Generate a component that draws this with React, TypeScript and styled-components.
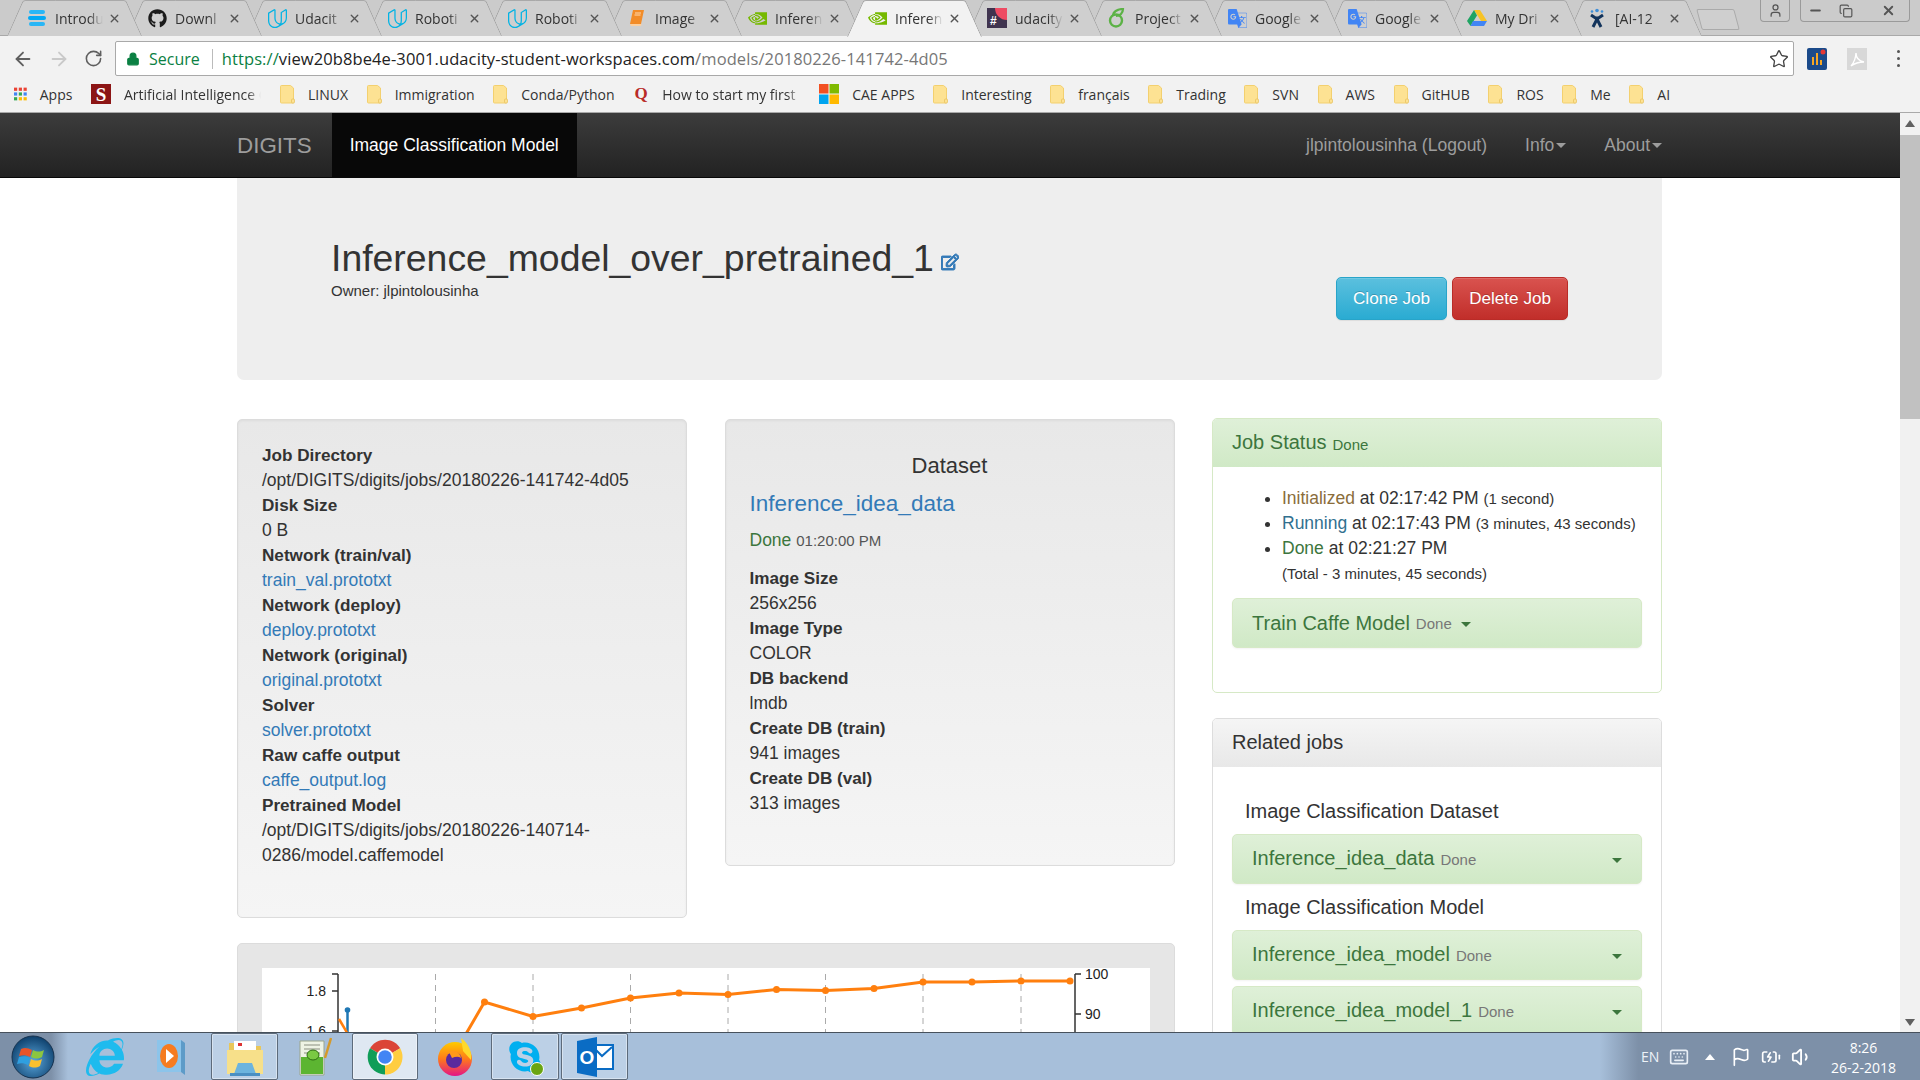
import React from "react";
import styled, { createGlobalStyle } from "styled-components";
import {
  ArrowLeft,
  ArrowRight,
  RotateCw,
  Star,
  X,
  User,
  Minus,
  Copy,
  Lock,
  Flag,
  Volume1,
  Keyboard,
  BatteryCharging,
} from "lucide-react";
import { FaGithub, FaRegEdit, FaSkype, FaInternetExplorer } from "react-icons/fa";
import { SiUdacity, SiNvidia, SiGoogletranslate } from "react-icons/si";

const FONT = '"Liberation Sans", Arial, sans-serif';
const UI_FONT = '"Open Sans", "Liberation Sans", sans-serif';

const HamburgerIcon = () => (
  <svg width="18" height="18" viewBox="0 0 18 18">
    <rect x="1" y="1" width="16" height="4" rx="2" fill="#29b6f6" />
    <rect x="0" y="7" width="18" height="4" rx="2" fill="#03a9f4" />
    <rect x="1" y="13" width="16" height="4" rx="2" fill="#29b6f6" />
  </svg>
);

const BookIcon = () => (
  <svg width="18" height="18" viewBox="0 0 18 18">
    <path d="M5 1h11l-3 14H2z" fill="#f28c28" />
    <path d="M2 15l1 2h10l.5-2z" fill="#fbd0a0" />
    <path d="M7 4h6M6.5 6h6" stroke="#ffd9b0" strokeWidth="1" />
  </svg>
);

const SlackIcon = () => (
  <svg width="20" height="20" viewBox="0 0 20 20">
    <rect width="20" height="20" fill="#40344f" />
    <path d="M8 0h12v12a12 12 0 0 1-12-12z" fill="#ee4b63" />
    <text x="3" y="17" fontSize="12" fontWeight="700" fontFamily={FONT} fill="#fff">#</text>
  </svg>
);

const LeafIcon = () => (
  <svg width="18" height="20" viewBox="0 0 18 20" fill="none">
    <circle cx="8" cy="12.5" r="6" stroke="#5cb246" strokeWidth="2.4" />
    <path d="M5 8c0-4 4-7 10-7-0 4-3 7-7 7" stroke="#5cb246" strokeWidth="2.2" />
  </svg>
);

const DriveIcon = () => (
  <svg width="20" height="18" viewBox="0 0 20 18">
    <path d="M7 1h6l7 11h-6z" fill="#f7c325" />
    <path d="M7 1l3 5.5L3.5 17 0 12z" fill="#1fa463" />
    <path d="M6 12h14l-3 5H3.500z" fill="#4285f4" />
  </svg>
);

const JiraIcon = () => (
  <svg width="18" height="20" viewBox="0 0 18 20" fill="none">
    <circle cx="9" cy="2.500" r="1.800" fill="#3f8fd8" />
    <circle cx="4" cy="3.500" r="1.300" fill="#3f8fd8" />
    <circle cx="14" cy="3.500" r="1.300" fill="#3f8fd8" />
    <path d="M3 7l6 4 6-4M5 19l4-8 4 8" stroke="#12335b" strokeWidth="3" />
  </svg>
);

const AppsIcon = () => (
  <svg width="18" height="18" viewBox="0 0 16 16">
    {["#ea4335", "#ea4335", "#ea4335", "#4285f4", "#34a853", "#4285f4", "#34a853", "#fbbc05", "#fbbc05"].map((c, i) => (
      <rect key={i} x={(i % 3) * 6} y={Math.floor(i / 3) * 6} width="4" height="4" fill={c} />
    ))}
  </svg>
);

const StanfordIcon = () => (
  <svg width="20" height="20" viewBox="0 0 20 20">
    <rect width="20" height="20" fill="#8c1515" />
    <text x="10" y="17" textAnchor="middle" fontSize="19" fontWeight="700" fontFamily='"Liberation Serif", serif' fill="#fff">S</text>
  </svg>
);

const QuoraIcon = () => (
  <svg width="16" height="18" viewBox="0 0 16 18">
    <text x="8" y="14" textAnchor="middle" fontSize="17" fontWeight="700" fontFamily='"Liberation Serif", serif' fill="#b92b27">Q</text>
  </svg>
);

const MsIcon = () => (
  <svg width="20" height="20" viewBox="0 0 20 20">
    <rect width="9.500" height="9.500" fill="#f25022" />
    <rect x="10.500" width="9.500" height="9.500" fill="#7fba00" />
    <rect y="10.500" width="9.500" height="9.500" fill="#00a4ef" />
    <rect x="10.500" y="10.500" width="9.500" height="9.500" fill="#ffb900" />
  </svg>
);

const FolderIcon = () => (
  <svg width="15" height="19" viewBox="0 0 15 19">
    <path d="M1.500 .5h9l3 2.500v15h-12a1 1 0 0 1-1-1V1.500a1 1 0 0 1 1-1z" fill="#fde293" stroke="#f3d06f" />
    <rect x="11.500" y="14" width="3" height="4" rx="1" fill="#fde293" stroke="#e5bf5a" strokeWidth=".7" />
  </svg>
);

const ExtensionIcon = () => (
  <svg width="20" height="22" viewBox="0 0 20 22">
    <rect width="20" height="22" rx="2" fill="#1a4a8a" />
    <path d="M6 17V9M10 17V5M14 17v-5" stroke="#f5a623" strokeWidth="2" />
    <circle cx="16" cy="4" r="2.500" fill="#e53935" />
  </svg>
);

const PdfIcon = () => (
  <svg width="20" height="22" viewBox="0 0 20 22" fill="none">
    <rect width="20" height="22" fill="#d8d8d8" />
    <path d="M4 18c3-3 5-9 5-13 0 5 3 8 8 9-4 0-9 1-13 4z" stroke="#fff" strokeWidth="1.400" />
  </svg>
);

const Orb = () => (
  <svg width="44" height="44" viewBox="0 0 44 44">
    <defs>
      <radialGradient id="orb" cx="50%" cy="60%" r="60%">
        <stop offset="0" stopColor="#5aa7dd" />
        <stop offset="1" stopColor="#0d3f6b" />
      </radialGradient>
    </defs>
    <circle cx="22" cy="22" r="21" fill="url(#orb)" stroke="#16324f" />
    <path d="M10 14c4-2 7-1 11 1l-2 7c-4-2-7-2-11-1z" fill="#e8542a" />
    <path d="M22 15c4 2 7 2 11 0l-2 7c-4 2-7 2-11 0z" fill="#8cc63f" />
    <path d="M8 22c4-1 7-1 11 1l-2 7c-4-2-7-2-11-1z" fill="#2f9fe0" />
    <path d="M20 24c4 2 7 2 11 0l-2 7c-4 2-7 2-11 0z" fill="#fbc02d" />
  </svg>
);

const MediaIcon = () => (
  <svg width="34" height="38" viewBox="0 0 34 38">
    <path d="M4 2h24v32H4z" fill="#8cc4ea" />
    <path d="M28 2l4 3v32l-4-3z" fill="#5d9bc8" />
    <ellipse cx="16" cy="18" rx="9" ry="12" fill="#f57c20" />
    <path d="M13 11l8 7-8 7z" fill="#fff" />
  </svg>
);

const ExplorerIcon = () => (
  <svg width="38" height="40" viewBox="0 0 38 40">
    <path d="M3 6h13l3 3h16v16H3z" fill="#e9c75a" />
    <rect x="8" y="4" width="22" height="12" fill="#fff" />
    <rect x="12" y="6" width="4" height="3" fill="#d33" />
    <path d="M1 13h36v24H1z" fill="#f7e08a" />
    <path d="M12 26h14l4 11H8z" fill="#6cb4de" />
    <rect x="4" y="36" width="30" height="3" fill="#4a8fc2" />
  </svg>
);

const NotepadIcon = () => (
  <svg width="34" height="40" viewBox="0 0 34 40">
    <path d="M2 4h24v34H2z" fill="#eef3e4" stroke="#9aa58c" />
    <path d="M3 20h22v17H3z" fill="#5cb531" />
    <path d="M6 8h16M6 12h16M6 16h16" stroke="#8a8f80" />
    <ellipse cx="15" cy="18" rx="6" ry="5" fill="#7ac943" stroke="#2d6e12" />
    <path d="M33 1l-6 20" stroke="#d59a2a" strokeWidth="2.500" />
  </svg>
);

const ChromeIcon = () => (
  <svg width="36" height="36" viewBox="0 0 36 36">
    <path d="M18 18L3 9.300A17.500 17.500 0 0 1 33.200 9.300z" fill="#db4437" />
    <path d="M18 18L33.200 9.300A17.500 17.500 0 0 1 18 35.500z" fill="#ffcd40" />
    <path d="M18 18V35.500A17.500 17.500 0 0 1 3 9.300z" fill="#0f9d58" />
    <circle cx="18" cy="18" r="8.500" fill="#fff" />
    <circle cx="18" cy="18" r="6.800" fill="#4285f4" />
  </svg>
);

const FirefoxIcon = () => (
  <svg width="36" height="40" viewBox="0 0 36 40">
    <defs>
      <linearGradient id="ffx" x1="0" y1="0" x2="0" y2="1">
        <stop offset="0" stopColor="#ffcb00" />
        <stop offset=".5" stopColor="#ff7a1a" />
        <stop offset="1" stopColor="#e31587" />
      </linearGradient>
    </defs>
    <circle cx="18" cy="22" r="17" fill="url(#ffx)" />
    <path d="M24 1c8 6 11 14 10 22L26 14z" fill="#ffd92b" />
    <circle cx="17" cy="23" r="8" fill="#5a2a9e" />
    <path d="M12 15c5-3 11 0 12 6-3-2-6-1-9 0z" fill="#ff9a1a" />
  </svg>
);

const OutlookIcon = () => (
  <svg width="38" height="42" viewBox="0 0 38 42">
    <rect x="16" y="9" width="21" height="24" fill="#fff" stroke="#0a6cc4" strokeWidth="2" />
    <path d="M17 11l9 9 10-9" stroke="#0a6cc4" strokeWidth="2" fill="none" />
    <path d="M1 5l20-4v40L1 37z" fill="#0a6cc4" />
    <text x="11" y="28" textAnchor="middle" fontSize="19" fontWeight="700" fontFamily={FONT} fill="#fff">O</text>
  </svg>
);

const TABS: { label: string; icon: React.ReactNode; active?: boolean }[] = [
  { label: "Introdu", icon: <HamburgerIcon /> },
  { label: "Downl", icon: <FaGithub size={19} color="#1b1b1b" /> },
  { label: "Udacit", icon: <SiUdacity size={19} color="#02b3e4" /> },
  { label: "Roboti", icon: <SiUdacity size={19} color="#02b3e4" /> },
  { label: "Roboti", icon: <SiUdacity size={19} color="#02b3e4" /> },
  { label: "Image", icon: <BookIcon /> },
  { label: "Inferen", icon: <SiNvidia size={19} color="#76b900" /> },
  { label: "Inferen", icon: <SiNvidia size={19} color="#76b900" />, active: true },
  { label: "udacity", icon: <SlackIcon /> },
  { label: "Project", icon: <LeafIcon /> },
  { label: "Google", icon: <SiGoogletranslate size={19} color="#4285f4" /> },
  { label: "Google", icon: <SiGoogletranslate size={19} color="#4285f4" /> },
  { label: "My Dri", icon: <DriveIcon /> },
  { label: "[AI-12", icon: <JiraIcon /> },
];

const BOOKMARKS = ["LINUX", "Immigration", "Conda/Python"];
const BOOKMARKS_AFTER = ["Interesting", "français", "Trading", "SVN", "AWS", "GitHUB", "ROS", "Me", "AI"];

const DETAILS: { label: string; value: string; link?: boolean }[] = [
  { label: "Job Directory", value: "/opt/DIGITS/digits/jobs/20180226-141742-4d05" },
  { label: "Disk Size", value: "0 B" },
  { label: "Network (train/val)", value: "train_val.prototxt", link: true },
  { label: "Network (deploy)", value: "deploy.prototxt", link: true },
  { label: "Network (original)", value: "original.prototxt", link: true },
  { label: "Solver", value: "solver.prototxt", link: true },
  { label: "Raw caffe output", value: "caffe_output.log", link: true },
  { label: "Pretrained Model", value: "/opt/DIGITS/digits/jobs/20180226-140714-0286/model.caffemodel" },
];

const DATASET: { label: string; value: string }[] = [
  { label: "Image Size", value: "256x256" },
  { label: "Image Type", value: "COLOR" },
  { label: "DB backend", value: "lmdb" },
  { label: "Create DB (train)", value: "941 images" },
  { label: "Create DB (val)", value: "313 images" },
];

const ORANGE_POINTS = [
  [222.5, 34], [271, 48.5], [319.5, 40], [368.5, 30], [417, 25], [466, 26.5], [514.5, 21.5],
  [563.5, 22.5], [612, 20.5], [661, 14], [710, 14], [759, 13], [808, 13],
];
const GRID_X = [173.5, 271, 368.5, 466, 563.5, 661, 759];

const Chart = () => (
  <svg width="888" height="330" viewBox="0 0 888 330" fontFamily={FONT} fontSize="14" fill="#222">
    {GRID_X.map((x) => (
      <line key={x} x1={x} y1="6" x2={x} y2="330" stroke="#aaa" strokeDasharray="6 5" />
    ))}
    <path d="M76 6V330M70 6h6M70 23h6M70 63h6" stroke="#333" fill="none" strokeWidth="1.500" />
    <text x="64" y="28" textAnchor="end">1.8</text>
    <text x="64" y="68" textAnchor="end">1.6</text>
    <path d="M813 6V330M813 6h6M813 46h6" stroke="#333" fill="none" strokeWidth="1.500" />
    <text x="823" y="11">100</text>
    <text x="823" y="51">90</text>
    <path d="M85.500 42V90" stroke="#1f77b4" strokeWidth="2.500" />
    <circle cx="85.500" cy="42" r="2.800" fill="#1f77b4" />
    <path d="M77 51L100 90" stroke="#ff7f0e" strokeWidth="2.500" fill="none" />
    <path
      d={`M190 90L${ORANGE_POINTS.map((p) => p.join(" ")).join("L")}`}
      stroke="#ff7f0e"
      strokeWidth="3"
      fill="none"
    />
    {ORANGE_POINTS.map(([x, y]) => (
      <circle key={x} cx={x} cy={y} r="3.500" fill="#ff7f0e" />
    ))}
  </svg>
);

const App = () => {
  return (
    <StWindow>
      <GlobalStyle />
      <StTabStrip>
        {TABS.map((tab, i) => (
          <StTab key={i} $active={tab.active} $order={TABS.length - i}>
            <StTabIcon>{tab.icon}</StTabIcon>
            <StTabLabel>{tab.label}</StTabLabel>
            <X size={13} color="#555" strokeWidth={2.5} />
          </StTab>
        ))}
        <StNewTab />
        <StWindowControls>
          <StUserButton>
            <User size={15} color="#555" />
          </StUserButton>
          <StCaptionGroup>
            <Minus size={15} color="#555" strokeWidth={3} />
            <Copy size={14} color="#555" />
            <X size={15} color="#555" strokeWidth={3} />
          </StCaptionGroup>
        </StWindowControls>
      </StTabStrip>

      <StToolbar>
        <ArrowLeft size={22} color="#5f5f5f" />
        <ArrowRight size={22} color="#c9c9c9" />
        <RotateCw size={19} color="#5f5f5f" />
        <StOmnibox>
          <Lock size={14} color="#0b8043" fill="#0b8043" />
          <StSecure>Secure</StSecure>
          <StOmniDivider />
          <StUrl>
            <StUrlScheme>https://</StUrlScheme>
            view20b8be4e-3001.udacity-student-workspaces.com
            <StUrlPath>/models/20180226-141742-4d05</StUrlPath>
          </StUrl>
          <StStar>
            <Star size={20} color="#444" strokeWidth={1.6} />
          </StStar>
        </StOmnibox>
        <StExtensions>
          <ExtensionIcon />
          <PdfIcon />
          <StDots>
            <i />
            <i />
            <i />
          </StDots>
        </StExtensions>
      </StToolbar>

      <StBookmarks>
        <StBookmark $width={77}>
          <AppsIcon />
          Apps
        </StBookmark>
        <StBookmark $width={189}>
          <StanfordIcon />
          <StFade>Artificial Intelligence C</StFade>
        </StBookmark>
        {BOOKMARKS.map((b) => (
          <StBookmark key={b}>
            <FolderIcon />
            {b}
          </StBookmark>
        ))}
        <StBookmark $width={186}>
          <QuoraIcon />
          <StFade>How to start my first</StFade>
        </StBookmark>
        <StBookmark>
          <MsIcon />
          CAE APPS
        </StBookmark>
        {BOOKMARKS_AFTER.map((b) => (
          <StBookmark key={b}>
            <FolderIcon />
            {b}
          </StBookmark>
        ))}
      </StBookmarks>

      <StViewport>
        <StPage>
          <StNavbar>
            <StBrand>DIGITS</StBrand>
            <StNavActive>Image Classification Model</StNavActive>
            <StNavRight>
              <StNavLink>jlpintolousinha (Logout)</StNavLink>
              <StNavLink>
                Info<StNavCaret />
              </StNavLink>
              <StNavLink>
                About<StNavCaret />
              </StNavLink>
            </StNavRight>
          </StNavbar>

          <StContainer>
            <StHero>
              <div>
                <StTitle>
                  Inference_model_over_pretrained_1
                  <StEdit>
                    <FaRegEdit size={18} color="#337ab7" stroke="#337ab7" strokeWidth={30} />
                  </StEdit>
                </StTitle>
                <StOwner>Owner: jlpintolousinha</StOwner>
              </div>
              <StHeroButtons>
                <StButton $from="#5bc0de" $to="#2aabd2" $border="#28a4c9">Clone Job</StButton>
                <StButton $from="#d9534f" $to="#c12e2a" $border="#b92c28">Delete Job</StButton>
              </StHeroButtons>
            </StHero>

            <StColumns>
              <StLeftArea>
                <StWellRow>
                  <StWell $minHeight={499}>
                    {DETAILS.map((d) => (
                      <div key={d.label}>
                        <StTerm>{d.label}</StTerm>
                        {d.link ? <StLink>{d.value}</StLink> : <StValue>{d.value}</StValue>}
                      </div>
                    ))}
                  </StWell>
                  <StWell $minHeight={447}>
                    <StDatasetTitle>Dataset</StDatasetTitle>
                    <StDatasetLink>Inference_idea_data</StDatasetLink>
                    <StDatasetStatus>
                      Done <StDatasetTime>01:20:00 PM</StDatasetTime>
                    </StDatasetStatus>
                    {DATASET.map((d) => (
                      <div key={d.label}>
                        <StTerm>{d.label}</StTerm>
                        <StValue>{d.value}</StValue>
                      </div>
                    ))}
                  </StWell>
                </StWellRow>
                <StChartWell>
                  <StPlot>
                    <Chart />
                  </StPlot>
                </StChartWell>
              </StLeftArea>

              <StRightArea>
                <StPanel $border="#d6e9c6">
                  <StPanelHeading $from="#dff0d8" $to="#d0e9c6" $color="#3c763d">
                    Job Status <StHeadingDone>Done</StHeadingDone>
                  </StPanelHeading>
                  <StPanelBody>
                    <StStatusList>
                      <li>
                        <StStage $color="#8a6d3b">Initialized</StStage> at 02:17:42 PM <small>(1 second)</small>
                      </li>
                      <li>
                        <StStage $color="#31708f">Running</StStage> at 02:17:43 PM <small>(3 minutes, 43 seconds)</small>
                      </li>
                      <li>
                        <StStage $color="#3c763d">Done</StStage> at 02:21:27 PM
                      </li>
                      <StStatusTotal>(Total - 3 minutes, 45 seconds)</StStatusTotal>
                    </StStatusList>
                    <StJobBar>
                      <StJobName>Train Caffe Model</StJobName>
                      <StJobDone>Done</StJobDone>
                      <StJobCaret />
                    </StJobBar>
                    <StPanelFoot />
                  </StPanelBody>
                </StPanel>

                <StPanel $border="#ddd">
                  <StPanelHeading $from="#f5f5f5" $to="#e8e8e8" $color="#333">
                    Related jobs
                  </StPanelHeading>
                  <StPanelBody>
                    <StRelatedLabel $height={54} $top={8}>Image Classification Dataset</StRelatedLabel>
                    <StJobBar $spread>
                      <span>
                        <StJobName>Inference_idea_data</StJobName>
                        <StJobDone>Done</StJobDone>
                      </span>
                      <StJobCaret />
                    </StJobBar>
                    <StRelatedLabel $height={46} $top={0}>Image Classification Model</StRelatedLabel>
                    <StJobBar $spread>
                      <span>
                        <StJobName>Inference_idea_model</StJobName>
                        <StJobDone>Done</StJobDone>
                      </span>
                      <StJobCaret />
                    </StJobBar>
                    <StJobBar $spread>
                      <span>
                        <StJobName>Inference_idea_model_1</StJobName>
                        <StJobDone>Done</StJobDone>
                      </span>
                      <StJobCaret />
                    </StJobBar>
                  </StPanelBody>
                </StPanel>
              </StRightArea>
            </StColumns>
          </StContainer>
        </StPage>

        <StScrollbar>
          <StArrowUp />
          <StThumb />
          <StArrowDown />
        </StScrollbar>
      </StViewport>

      <StTaskbar>
        <StStart>
          <Orb />
        </StStart>
        <StTaskItem $width={70}>
          <FaInternetExplorer size={38} color="#1ebbee" />
        </StTaskItem>
        <StTaskItem $width={67} $paddingRight={11}>
          <MediaIcon />
        </StTaskItem>
        <StTaskItem $width={67} $open>
          <ExplorerIcon />
        </StTaskItem>
        <StTaskItem $width={70}>
          <NotepadIcon />
        </StTaskItem>
        <StTaskItem $width={66} $open $light>
          <ChromeIcon />
        </StTaskItem>
        <StTaskItem $width={69}>
          <FirefoxIcon />
        </StTaskItem>
        <StTaskItem $width={68} $open>
          <FaSkype size={36} color="#00aff0" />
          <StSkypeBadge />
        </StTaskItem>
        <StTaskItem $width={67} $open>
          <OutlookIcon />
        </StTaskItem>

        <StTray>
          <StTrayLang>EN</StTrayLang>
          <Keyboard size={20} color="#e8eef5" />
          <StTrayArrow />
          <Flag size={20} color="#fff" />
          <BatteryCharging size={20} color="#fff" />
          <Volume1 size={22} color="#fff" />
          <StClock>
            <span>8:26</span>
            <span>26-2-2018</span>
          </StClock>
        </StTray>
      </StTaskbar>
    </StWindow>
  );
};

export default App;

const GlobalStyle = createGlobalStyle`
  html, body {
    margin: 0;
    padding: 0;
    height: 100%;
    overflow: hidden;
    background: #fff;
    font-family: ${FONT};
  }
  * {
    box-sizing: border-box;
  }
`;

const StWindow = styled.div`
  width: 1920px;
  height: 1080px;
  display: flex;
  flex-direction: column;
  overflow: hidden;
`;

const StTabStrip = styled.div`
  height: 36px;
  flex: none;
  display: flex;
  padding-left: 7px;
  background: #cbcbcb;
  border-bottom: 1px solid #a9a9a9;
`;

const StTab = styled.div<{ $active?: boolean; $order: number }>`
  position: relative;
  z-index: ${({ $active, $order }) => ($active ? 40 : $order)};
  width: 135px;
  height: 36px;
  margin-right: -15px;
  padding-left: 20px;
  flex: none;
  display: flex;
  align-items: center;
  font: 14px ${UI_FONT};
  color: #333;

  &::before,
  &::after {
    content: "";
    position: absolute;
    z-index: -1;
    top: 0;
    height: ${({ $active }) => ($active ? "36px" : "35px")};
    width: 52%;
    background: ${({ $active }) => ($active ? "#f2f2f2" : "#cfcfcf")};
    border-top: 1px solid #a9a9a9;
  }

  &::before {
    left: 0;
    border-left: 1px solid #a0a0a0;
    border-top-left-radius: 3px;
    transform-origin: bottom left;
    transform: skewX(-23.800deg);
  }

  &::after {
    right: 0;
    border-right: 1px solid #a0a0a0;
    border-top-right-radius: 3px;
    transform-origin: bottom right;
    transform: skewX(23.800deg);
  }
`;

const StTabIcon = styled.span`
  width: 20px;
  height: 20px;
  margin-right: 8px;
  flex: none;
  display: flex;
  align-items: center;
  justify-content: center;
`;

const StTabLabel = styled.span`
  width: 48px;
  margin-right: 5px;
  flex: none;
  overflow: hidden;
  white-space: nowrap;
  -webkit-mask-image: linear-gradient(to right, #000 70%, transparent 100%);
  mask-image: linear-gradient(to right, #000 70%, transparent 100%);
`;

const StNewTab = styled.div`
  width: 38px;
  height: 21px;
  margin: 9px 0 0 12px;
  flex: none;
  background: #cfcfcf;
  border: 1px solid #aaa;
  border-radius: 2px;
  transform: skewX(15deg);
`;

const StWindowControls = styled.div`
  margin-left: auto;
  padding-right: 10px;
  display: flex;
  gap: 10px;
  align-items: flex-start;
`;

const StUserButton = styled.div`
  width: 30px;
  height: 22px;
  display: flex;
  align-items: center;
  justify-content: center;
  border: 1px solid #9a9a9a;
  border-top: 0;
  border-radius: 0 0 4px 4px;
`;

const StCaptionGroup = styled.div`
  width: 110px;
  height: 22px;
  padding: 0 13px 0 7px;
  display: flex;
  align-items: center;
  gap: 16px;
  border: 1px solid #9a9a9a;
  border-top: 0;
  border-radius: 0 0 4px 4px;

  svg:last-child {
    margin-left: auto;
  }
`;

const StToolbar = styled.div`
  height: 40px;
  flex: none;
  padding: 5px 0 0 12px;
  display: flex;
  align-items: center;
  gap: 14px;
  background: #f2f2f2;
`;

const StOmnibox = styled.div`
  width: 1679px;
  height: 35px;
  margin-left: -2px;
  padding: 0 4px 0 10px;
  display: flex;
  align-items: center;
  background: #fff;
  border: 1px solid #a9a9a9;
  border-radius: 2px;
  font: 16.500px ${UI_FONT};
`;

const StSecure = styled.span`
  margin-left: 9px;
  font-size: 16px;
  color: #0b8043;
`;

const StOmniDivider = styled.span`
  width: 1px;
  height: 20px;
  margin: 0 9px 0 12px;
  background: #bbb;
`;

const StUrl = styled.span`
  letter-spacing: 0.1px;
  color: #222;
`;

const StUrlScheme = styled.span`
  color: #0b8043;
`;

const StUrlPath = styled.span`
  color: #777;
`;

const StStar = styled.span`
  margin-left: auto;
  display: flex;
`;

const StExtensions = styled.div`
  margin-left: -1px;
  display: flex;
  align-items: center;
  gap: 20px;
`;

const StDots = styled.div`
  margin-left: 10px;
  display: flex;
  flex-direction: column;
  gap: 4px;

  i {
    width: 3px;
    height: 3px;
    border-radius: 50%;
    background: #555;
  }
`;

const StBookmarks = styled.div`
  height: 37px;
  flex: none;
  padding-left: 14px;
  display: flex;
  align-items: center;
  background: #f2f2f2;
  border-bottom: 1px solid #a9a9a9;
  font: 14px ${UI_FONT};
  color: #333;
`;

const StBookmark = styled.div<{ $width?: number }>`
  ${({ $width }) => ($width ? `width: ${$width}px;` : "")}
  padding-right: 18.600px;
  flex: none;
  display: flex;
  align-items: center;
  gap: 13px;
  white-space: nowrap;
  overflow: hidden;
`;

const StFade = styled.span`
  flex: 1;
  overflow: hidden;
  -webkit-mask-image: linear-gradient(to right, #000 90%, transparent 100%);
  mask-image: linear-gradient(to right, #000 90%, transparent 100%);
`;

const StViewport = styled.div`
  flex: 1;
  min-height: 0;
  display: flex;
`;

const StPage = styled.div`
  width: 1900px;
  overflow: hidden;
  background: #fff;
  color: #333;
  font: 17.500px/25px ${FONT};
`;

const StNavbar = styled.div`
  height: 65px;
  padding: 0 219px 0 237px;
  display: flex;
  align-items: stretch;
  background: linear-gradient(to bottom, #3c3c3c 0, #222 100%);
  border-bottom: 1px solid #080808;
`;

const StBrand = styled.div`
  padding-right: 20px;
  display: flex;
  align-items: center;
  font-size: 22.400px;
  color: #9d9d9d;
`;

const StNavActive = styled.div`
  padding: 0 18px;
  display: flex;
  align-items: center;
  background: #080808;
  color: #fff;
`;

const StNavRight = styled.div`
  margin-left: auto;
  display: flex;
`;

const StNavLink = styled.div`
  padding: 0 19px;
  display: flex;
  align-items: center;
  color: #9d9d9d;
`;

const StNavCaret = styled.span`
  width: 0;
  height: 0;
  margin-left: 2px;
  border-top: 5px solid #9d9d9d;
  border-left: 5px solid transparent;
  border-right: 5px solid transparent;
`;

const StContainer = styled.div`
  padding: 0 238px 0 237px;
`;

const StHero = styled.div`
  height: 202px;
  margin-bottom: 39px;
  padding: 56px 94px 0;
  display: flex;
  justify-content: space-between;
  background: #eee;
  border-radius: 0 0 7px 7px;
`;

const StTitle = styled.h1`
  margin: 0;
  display: flex;
  align-items: flex-end;
  font-size: 37.400px;
  font-weight: 400;
  line-height: 48px;
  color: #333;
`;

const StEdit = styled.span`
  margin: 0 0 11px 7px;
  display: flex;
`;

const StOwner = styled.div`
  margin-top: -1px;
  font-size: 15px;
  line-height: 20px;
`;

const StHeroButtons = styled.div`
  margin-top: 43px;
  display: flex;
  gap: 5px;
  align-items: flex-start;
`;

const StButton = styled.div<{ $from: string; $to: string; $border: string }>`
  height: 43px;
  padding: 0 16px;
  display: flex;
  align-items: center;
  font-size: 17.140px;
  color: #fff;
  text-shadow: 0 -1px 0 rgba(0, 0, 0, 0.2);
  background: linear-gradient(to bottom, ${({ $from }) => $from} 0, ${({ $to }) => $to} 100%);
  border: 1px solid ${({ $border }) => $border};
  border-radius: 5px;
  box-shadow: inset 0 1px 0 rgba(255, 255, 255, 0.15), 0 1px 1px rgba(0, 0, 0, 0.075);
`;

const StColumns = styled.div`
  display: grid;
  grid-template-columns: 937.500px 450px;
  column-gap: 37.500px;
  align-items: start;
`;

const StLeftArea = styled.div`
  display: flex;
  flex-direction: column;
  gap: 25px;
`;

const StWellRow = styled.div`
  display: grid;
  grid-template-columns: 450px 450px;
  column-gap: 37.500px;
  align-items: start;
`;

const StWell = styled.div<{ $minHeight: number }>`
  min-height: ${({ $minHeight }) => $minHeight}px;
  padding: 23px 24px;
  background: linear-gradient(to bottom, #e8e8e8 0, #f5f5f5 100%);
  border: 1px solid #dcdcdc;
  border-radius: 5px;
  box-shadow: inset 0 1px 3px rgba(0, 0, 0, 0.05), 0 1px 0 rgba(255, 255, 255, 0.1);
`;

const StTerm = styled.div`
  font-size: 17.140px;
  font-weight: 700;
`;

const StValue = styled.div``;

const StLink = styled.div`
  color: #337ab7;
`;

const StDatasetTitle = styled.div`
  padding-top: 10px;
  font-size: 22px;
  line-height: 26px;
  text-align: center;
`;

const StDatasetLink = styled.div`
  margin-top: 7px;
  font-size: 22.500px;
  line-height: 36px;
  color: #337ab7;
`;

const StDatasetStatus = styled.div`
  margin: 6px 0 13px;
  color: #3c763d;
`;

const StDatasetTime = styled.span`
  font-size: 15px;
  color: #555;
`;

const StChartWell = styled.div`
  height: 400px;
  padding: 24px;
  background: #e6e6e6;
  border: 1px solid #dcdcdc;
  border-radius: 5px;
`;

const StPlot = styled.div`
  background: #fff;
  height: 100%;
`;

const StRightArea = styled.div`
  margin-top: -1px;
  display: flex;
  flex-direction: column;
  gap: 25px;
`;

const StPanel = styled.div<{ $border: string }>`
  border: 1px solid ${({ $border }) => $border};
  border-radius: 5px;
  overflow: hidden;
`;

const StPanelHeading = styled.div<{ $from: string; $to: string; $color: string }>`
  height: 48px;
  padding: 0 19px 1px;
  display: flex;
  align-items: center;
  gap: 6px;
  font-size: 20px;
  color: ${({ $color }) => $color};
  background: linear-gradient(to bottom, ${({ $from }) => $from} 0, ${({ $to }) => $to} 100%);
`;

const StHeadingDone = styled.small`
  font-size: 15px;
  padding-top: 3px;
`;

const StPanelBody = styled.div`
  padding: 19px 19px 18px;
`;

const StStatusList = styled.ul`
  margin: 0 0 11px;
  padding-left: 50px;

  small {
    font-size: 15px;
  }
`;

const StStatusTotal = styled.div`
  font-size: 15px;
  line-height: 26px;
`;

const StStage = styled.span<{ $color: string }>`
  color: ${({ $color }) => $color};
`;

const StJobBar = styled.div<{ $spread?: boolean }>`
  height: 50px;
  margin-bottom: 6px;
  padding: 0 19px;
  display: flex;
  align-items: center;
  justify-content: ${({ $spread }) => ($spread ? "space-between" : "flex-start")};
  background: linear-gradient(to bottom, #dff0d8 0, #d0e9c6 100%);
  border: 1px solid #d6e9c6;
  border-radius: 5px;
  box-shadow: 0 1px 2px rgba(0, 0, 0, 0.05);
`;

const StJobName = styled.span`
  font-size: 20px;
  color: #3c763d;
`;

const StJobDone = styled.small`
  margin-left: 6px;
  font-size: 15px;
  color: #777;
`;

const StJobCaret = styled.span`
  width: 0;
  height: 0;
  margin: 2px 0 0 9px;
  border-top: 5px solid #3c763d;
  border-left: 5px solid transparent;
  border-right: 5px solid transparent;
`;

const StPanelFoot = styled.div`
  height: 20px;
`;

const StRelatedLabel = styled.div<{ $height: number; $top: number }>`
  height: ${({ $height }) => $height}px;
  margin-top: -6px;
  padding: ${({ $top }) => $top}px 0 0 13px;
  display: flex;
  align-items: center;
  font-size: 20px;
`;

const StScrollbar = styled.div`
  width: 20px;
  display: flex;
  flex-direction: column;
  background: #f1f1f1;
`;

const StArrowUp = styled.span`
  width: 0;
  height: 0;
  margin: 7px auto 8px;
  border-bottom: 7px solid #606060;
  border-left: 5px solid transparent;
  border-right: 5px solid transparent;
`;

const StThumb = styled.div`
  height: 284px;
  background: #c1c1c1;
`;

const StArrowDown = styled.span`
  width: 0;
  height: 0;
  margin: auto auto 6px;
  border-top: 7px solid #606060;
  border-left: 5px solid transparent;
  border-right: 5px solid transparent;
`;

const StTaskbar = styled.div`
  height: 48px;
  flex: none;
  padding-right: 0;
  display: flex;
  gap: 2px;
  background: #a7bfda;
  border-top: 1px solid #47515c;
`;

const StStart = styled.div`
  width: 68px;
  padding-left: 11px;
  flex: none;
  display: flex;
  align-items: center;
  background: linear-gradient(to right, #7d90a8 75%, #a7bfda 100%);
`;

const StTaskItem = styled.div<{ $width: number; $paddingRight?: number; $open?: boolean; $light?: boolean }>`
  position: relative;
  width: ${({ $width }) => $width}px;
  padding-right: ${({ $paddingRight }) => $paddingRight ?? 0}px;
  flex: none;
  display: flex;
  align-items: center;
  justify-content: center;
  ${({ $open, $light }) =>
    $open
      ? `
    border: 1px solid #5d6b7b;
    border-radius: 2px;
    box-shadow: inset 0 0 0 1px rgba(255, 255, 255, 0.4);
    background: ${$light ? "#dfe8f2" : "#bcd0e6"};
  `
      : ""}
`;

const StSkypeBadge = styled.span`
  position: absolute;
  right: 14px;
  bottom: 3px;
  width: 14px;
  height: 14px;
  border-radius: 50%;
  background: #6aa512;
  border: 1px solid #fff;
`;

const StTray = styled.div`
  width: 320px;
  margin-left: auto;
  padding: 0 24px 0 41px;
  display: flex;
  align-items: center;
  background: linear-gradient(to right, #a7bfda 0, #7d90a8 12%, #7d90a8 100%);
  color: #fff;
  font-size: 13px;
  gap: 10px;
`;

const StTrayLang = styled.span`
  color: #eef3f8;
  font: 14px ${UI_FONT};
`;

const StTrayArrow = styled.span`
  width: 0;
  height: 0;
  margin: 0 6px;
  border-bottom: 6px solid #fff;
  border-left: 5px solid transparent;
  border-right: 5px solid transparent;
`;

const StClock = styled.div`
  margin-left: auto;
  padding-top: 1px;
  display: flex;
  flex-direction: column;
  align-items: center;
  gap: 1px;
  font: 14px ${UI_FONT};
  color: #fff;
`;
